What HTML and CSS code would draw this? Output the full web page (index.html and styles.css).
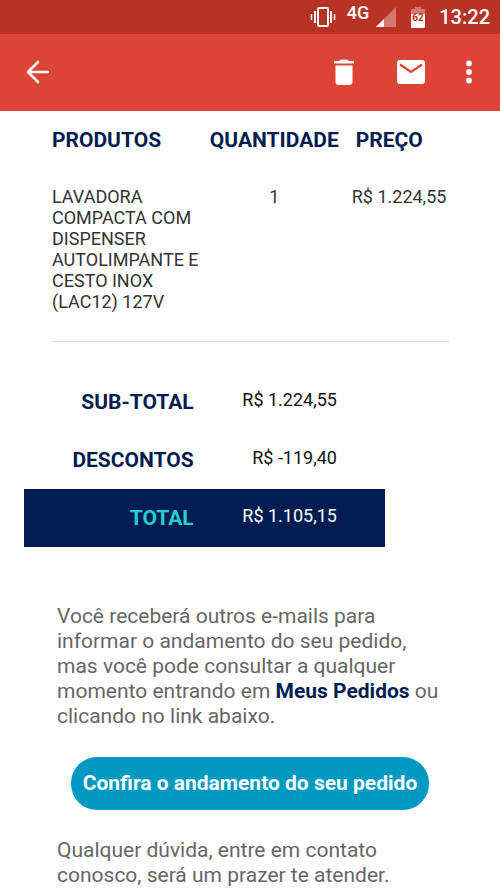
FILE: index.html
```html
<!DOCTYPE html>
<html lang="pt-BR">
<head>
<meta charset="utf-8">
<meta name="viewport" content="width=device-width, initial-scale=1">
<title>Pedido</title>
<link rel="stylesheet" href="styles.css">
</head>
<body>
<div class="status">
  <svg class="vibrate" width="26" height="20" viewBox="0 0 26 20" fill="none" stroke="currentColor" aria-hidden="true">
    <rect x="8" y="1" width="10" height="18" rx="1" stroke-width="2"/>
    <path d="M5 4v12M21 4v12" stroke-width="2"/>
    <path d="M1.500 7v6M24.500 7v6" stroke-width="1.500"/>
  </svg>
  <span class="network">4G</span>
  <svg class="signal" width="20" height="20" viewBox="0 0 20 20" aria-hidden="true">
    <path d="M0 20L20 0v20z" fill="#d5786e"/>
    <path d="M0 20L8 12v8z" fill="#fff"/>
  </svg>
  <svg class="battery" width="14" height="21" viewBox="0 0 14 21" aria-hidden="true">
    <path d="M4 0h6v2h3a1 1 0 0 1 1 1v5H0V3a1 1 0 0 1 1-1h3z" fill="#d5786e"/>
    <path d="M0 7h14v13a1 1 0 0 1-1 1H1a1 1 0 0 1-1-1z" fill="#fff"/>
    <text class="level" x="7" y="14" text-anchor="middle">62</text>
  </svg>
  <time class="clock">13:22</time>
</div>
<header class="appbar">
  <button class="icon back" type="button" aria-label="Voltar">
    <svg width="24" height="24" viewBox="0 0 24 24" fill="none" stroke="currentColor" stroke-width="2.500" stroke-linecap="round" stroke-linejoin="round"><path d="M12 2L2 12l10 10M2 12h20"/></svg>
  </button>
  <button class="icon" type="button" aria-label="Excluir">
    <svg width="20" height="26" viewBox="0 0 20 26" fill="currentColor"><path d="M1 2h4.500L7 0.500h6L14.500 2H19a1 1 0 0 1 1 1v1.500H0V3a1 1 0 0 1 1-1zM1.500 6.500h17V23a3 3 0 0 1-3 3h-11a3 3 0 0 1-3-3z"/></svg>
  </button>
  <button class="icon mail" type="button" aria-label="Marcar como não lida">
    <svg width="28" height="24" viewBox="0 0 28 24"><rect width="28" height="24" rx="3" fill="currentColor"/><path d="M3 4.500l11 7.500 11-7.500" fill="none" stroke="#db4437" stroke-width="2.200"/></svg>
  </button>
  <button class="icon more" type="button" aria-label="Mais opções">
    <svg width="6" height="24" viewBox="0 0 6 24" fill="currentColor"><circle cx="3" cy="3.500" r="2.900"/><circle cx="3" cy="12" r="2.900"/><circle cx="3" cy="20.500" r="2.900"/></svg>
  </button>
</header>
<main>
  <table class="items">
    <thead><tr><th class="product">PRODUTOS</th><th class="qty">QUANTIDADE</th><th class="price">PREÇO</th></tr></thead>
    <tbody><tr><td>LAVADORA COMPACTA COM DISPENSER AUTOLIMPANTE E CESTO INOX (LAC12) 127V</td><td class="qty">1</td><td class="price">R$ 1.224,55</td></tr></tbody>
  </table>
  <table class="totals">
    <tbody>
      <tr><th scope="row">SUB-TOTAL</th><td>R$ 1.224,55</td></tr>
      <tr><th scope="row">DESCONTOS</th><td>R$ -119,40</td></tr>
      <tr class="grand"><th scope="row">TOTAL</th><td>R$ 1.105,15</td></tr>
    </tbody>
  </table>
  <section class="message">
    <p>Você receberá outros e-mails para informar o andamento do seu pedido, mas você pode consultar a qualquer momento entrando em <a class="orders" href="#">Meus Pedidos</a> ou clicando no link abaixo.</p>
    <a class="cta" href="#">Confira o andamento do seu pedido</a>
    <p>Qualquer dúvida, entre em contato conosco, será um prazer te atender.</p>
  </section>
</main>
</body>
</html>
```
FILE: styles.css
```css
* { box-sizing: border-box; }
body {
  margin: 0;
  background: #fff;
  color: #333;
  font-family: Roboto, sans-serif;
  font-size: 18px;
  line-height: 21px;
}
.status {
  display: flex;
  align-items: center;
  justify-content: flex-end;
  height: 34px;
  padding: 0 10px;
  background: #b93226;
  color: #fff;
}
.network { margin: 0 7px 9px 11px; font-size: 18px; font-weight: 500; }
.battery { margin: 0 14px 0 15px; }
.level { font-size: 10px; font-weight: 700; fill: #b93226; }
.clock { font-size: 20px; font-weight: 500; }
.appbar {
  display: flex;
  align-items: center;
  height: 77px;
  padding: 0 11px 2px 18px;
  background: #db4437;
  color: #fff;
}
.icon {
  display: flex;
  align-items: center;
  justify-content: center;
  width: 40px;
  height: 48px;
  padding: 0;
  border: 0;
  background: none;
  color: inherit;
}
.back { margin-right: auto; }
.mail { margin: 0 18px 0 27px; }
main { padding-bottom: 2px; }
.items {
  width: calc(100% - 103px);
  margin: 0 51px 0 52px;
  border-collapse: collapse;
  border-bottom: 1px solid #ddd;
  table-layout: fixed;
}
.items th, .totals th { color: #001c50; font-size: 21px; font-weight: 700; line-height: 24px; }
.items th { padding: 17px 0 0; text-align: left; }
.items td { padding: 34px 0 29px; vertical-align: top; }
.items .product { width: 37%; }
.items .qty { width: 38%; text-align: center; white-space: nowrap; }
.items .price { padding-left: 2px; text-align: left; white-space: nowrap; }
.items th.price { padding-left: 6px; }
.totals {
  width: calc(100% - 139px);
  margin: 31px 115px 0 24px;
  border-collapse: collapse;
  color: #111;
}
.totals th, .totals td { height: 58px; text-align: right; vertical-align: top; }
.totals th { padding: 17px 0; }
.totals td { width: 53%; padding: 16px 48px 16px 0; }
.totals .grand { background: #001c50; color: #fff; }
.totals .grand th { color: #22cfd1; }
.message { padding: 57px 57px 0; color: #666; font-size: 21px; line-height: 25px; }
.message p { margin: 0; }
.orders { color: #001c50; font-weight: 700; text-decoration: none; }
.cta {
  display: block;
  margin: 28px 14px;
  padding: 14px 0;
  border-radius: 26px;
  background: #0099c1;
  color: #fff;
  font-weight: 700;
  text-align: center;
  text-decoration: none;
  white-space: nowrap;
}
```
